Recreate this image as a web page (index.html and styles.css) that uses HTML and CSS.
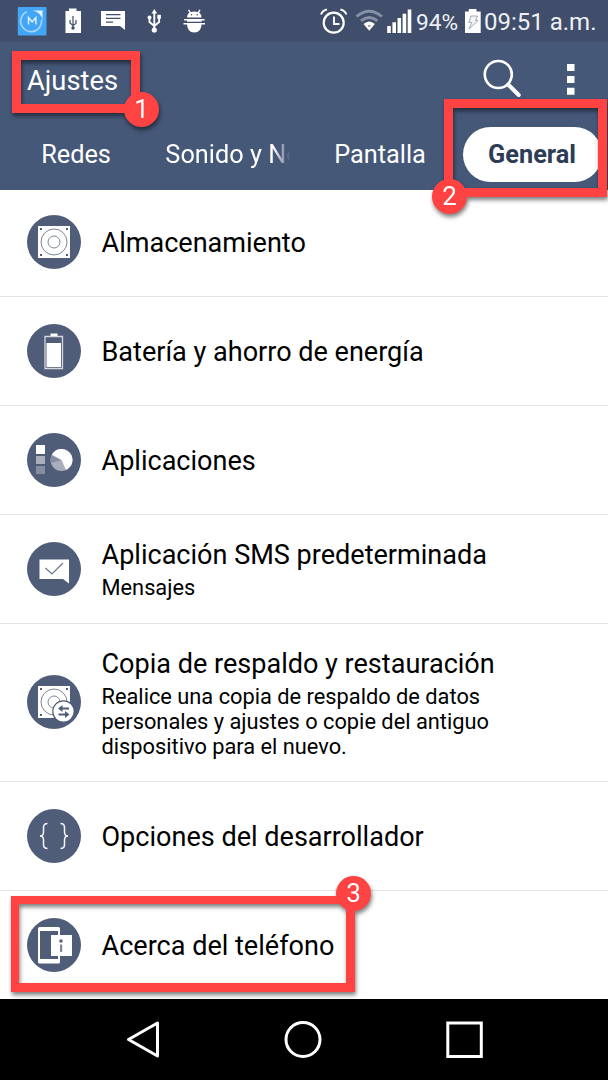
FILE: index.html
```
<!DOCTYPE html>
<html lang="es">

<head>
    <meta charset="utf-8">
    <title>Ajustes</title>
    <link rel="stylesheet" href="styles.css">
</head>

<body>
    <div class="status-bar">
        <svg class="status-icons" width="210" height="42" viewBox="0 0 210 42">
            <rect x="17.800" y="7" width="28.700" height="28.500" rx="1" fill="#42a5f5"/>
            <path d="M27 11.500A10.500 10.500 0 1 0 41.500 19.500" fill="none" stroke="#a9d6fb" stroke-width="1.600"/>
            <path d="M33 10.500h9.500v9.500q-1-7-9.500-9.500z" fill="#e4f3ff"/>
            <path d="M28.500 24.500v-7l3.700 4.500 3.700-4.500v7" fill="none" stroke="#e4f3ff" stroke-width="1.400"/>
            <path d="M65.500 11H69V8.500h7.500V11H81v22H65.500z" fill="#fff"/>
            <path d="M73 16v12M70 20v3l3 2.500 3-2v-3.500" fill="none" stroke="#404e6b" stroke-width="1.200"/>
            <circle cx="73" cy="28" r="1.700" fill="#404e6b"/>
            <path d="M101 11h24v19l-5-4h-19z" fill="#fff"/>
            <path d="M106 14.700h14.500M106 18.300h14.500M106 22.200h7" stroke="#404e6b" stroke-width="1.200"/>
            <path d="M154.300 12v18M149.500 18v4l4.800 4 4.800-4v-4" fill="none" stroke="#fff" stroke-width="1.900"/>
            <path d="M151.500 13.500l2.800-4.500 2.800 4.500z" fill="#fff"/>
            <circle cx="154.300" cy="30" r="2.600" fill="#fff"/>
            <circle cx="149.500" cy="17.500" r="2" fill="#fff"/>
            <rect x="157.300" y="14.800" width="3.600" height="4" fill="#fff"/>
            <path d="M187 17.500q0-6 7.300-6t7.300 6zM187 19h14.600v2.700H187zM187 23.500h14.600q0 9-7.300 9t-7.300-9z" fill="#fff"/>
            <path d="M188.500 9.800l2 3M200 9.800l-2 3M184 19.700h20.500M183.500 23.800h21.500" stroke="#fff" stroke-width="1.400"/>
            <circle cx="191.500" cy="14.800" r=".8" fill="#404e6b"/>
            <circle cx="197.200" cy="14.800" r=".8" fill="#404e6b"/>
        </svg>
        <div class="status-right">
            <svg width="96" height="42" viewBox="318 0 96 42">
                <circle cx="333.700" cy="22.700" r="10" fill="none" stroke="#fff" stroke-width="2.200"/>
                <path d="M334 16.500V24h5.500M321 14.500q1.500-4 6-5M346.400 14.500q-1.500-4-6-5" fill="none" stroke="#fff" stroke-width="1.900"/>
                <path d="M356.500 16.500q12.700-10.500 25.400 0M361 20.800q8.200-6.500 16.400 0" fill="none" stroke="#8791a5" stroke-width="2.800"/>
                <path d="M363.500 24q5.700-5 11.400 0l-5.700 6.800z" fill="#fff"/>
                <path d="M368 26h2.500" stroke="#404e6b"/>
                <path d="M387.200 26h3.600v7h-3.600zM392.400 22.300h3.600V33h-3.600zM397.500 18h3.600v15h-3.600zM402.600 13.700h3.600V33h-3.600zM407.700 9.500h3.600V33h-3.600z" fill="#fff"/>
            </svg>
            <span class="percent">94%</span>
            <svg class="battery" width="18" height="42" viewBox="464 0 18 42">
                <path d="M465 11.500h3.800V9h7.700v2.500h4.200V33H465z" fill="#fff"/>
                <path d="M471 16h6.500l-2 4.500h2.700L469 29l2.800-6.500h-3z" fill="#f5f5f5" stroke="#8f96a6" stroke-width=".8"/>
            </svg>
            <span class="time">09:51 a.m.</span>
        </div>
    </div>

    <div class="header">
        <div class="title-row">
            <div class="title">Ajustes
                <div class="mark mark-1"><span class="badge">1</span></div>
            </div>
            <svg width="108" height="50" viewBox="480 54 108 50">
                <circle cx="498.300" cy="74.500" r="13.500" fill="none" stroke="#fff" stroke-width="2.600"/>
                <path d="M508.200 84.500l10.500 10.500" stroke="#fff" stroke-width="4" stroke-linecap="round"/>
                <path d="M567 64h7.500v7H567zM567 76h7.500v7H567zM567 87.800h7.500v7H567z" fill="#fff"/>
            </svg>
        </div>
        <div class="tabs">
            <div class="tab">Redes</div>
            <div class="tab"><span class="tab-fade">Sonido y No</span></div>
            <div class="tab">Pantalla</div>
            <div class="tab">
                <span class="tab-active">General</span>
                <div class="mark mark-2"><span class="badge">2</span></div>
            </div>
        </div>
    </div>

    <ul class="list">
        <li class="item first">
            <svg class="icon" viewBox="0 0 54 54">
                <circle cx="27" cy="27" r="27" fill="#505d79"/>
                <path d="M11 11h32v32H11z" fill="#fff"/>
                <g fill="none" stroke="#7c869c">
                    <circle cx="27" cy="27" r="13"/>
                    <circle cx="27" cy="27" r="6"/>
                </g>
                <path d="M13 13h2v2h-2zM39 13h2v2h-2zM13 39h2v2h-2zM39 39h2v2h-2z" fill="#505d79"/>
            </svg>
            <div class="name">Almacenamiento</div>
        </li>
        <li class="item">
            <svg class="icon" viewBox="0 0 54 54">
                <circle cx="27" cy="27" r="27" fill="#505d79"/>
                <path d="M18 12.500h17.500v32H18z" fill="none" stroke="#d5d8df" stroke-width="1.300"/>
                <path d="M23.500 9.500h7V12h-7zM19.500 19h14.500v24H19.500z" fill="#fff"/>
            </svg>
            <div class="name">Batería y ahorro de energía</div>
        </li>
        <li class="item">
            <svg class="icon" viewBox="0 0 54 54">
                <circle cx="27" cy="27" r="27" fill="#505d79"/>
                <path d="M9 12h9v9H9z" fill="#fff"/>
                <path d="M9 23h9v8H9z" fill="#a8aebc"/>
                <path d="M9 33h9v8H9z" fill="#858d9f"/>
                <circle cx="34.500" cy="27" r="11" fill="#a8aebc"/>
                <path d="M34.500 27L24.500 22.500A11 11 0 0 0 24 30z" fill="#858d9f"/>
                <path d="M34.500 27L24.900 21.500A11 11 0 1 1 39 37z" fill="#fff"/>
            </svg>
            <div class="name">Aplicaciones</div>
        </li>
        <li class="item">
            <svg class="icon" viewBox="0 0 54 54">
                <circle cx="27" cy="27" r="27" fill="#505d79"/>
                <path d="M12.500 17.500H42v24L36 37H12.500z" fill="#fff"/>
                <path d="M18.500 26l6.500 6 11-11" fill="none" stroke="#69748c" stroke-width="1.200"/>
            </svg>
            <div class="text">
                <div class="name">Aplicación SMS predeterminada</div>
                <div class="desc">Mensajes</div>
            </div>
        </li>
        <li class="item tall">
            <svg class="icon" viewBox="0 0 54 54">
                <circle cx="27" cy="27" r="27" fill="#505d79"/>
                <path d="M11 11h32v32H11z" fill="#fff"/>
                <g fill="none" stroke="#7c869c">
                    <circle cx="27" cy="27" r="13"/>
                    <circle cx="27" cy="27" r="6"/>
                </g>
                <path d="M13 13h2v2h-2zM39 13h2v2h-2zM13 39h2v2h-2z" fill="#505d79"/>
                <circle cx="36.500" cy="36.500" r="10.700" fill="#fff" stroke="#505d79" stroke-width="1.200"/>
                <path d="M31 33.500l4.500-3.500v2.500H42v2h-6.500V37zM42.500 39.500L38 36v2.500h-6.500v2H38V43z" fill="#505d79"/>
            </svg>
            <div class="text">
                <div class="name">Copia de respaldo y restauración</div>
                <div class="desc">Realice una copia de respaldo de datos<br>personales y ajustes o copie del antiguo<br>dispositivo para el nuevo.</div>
            </div>
        </li>
        <li class="item">
            <svg class="icon" viewBox="0 0 54 54">
                <circle cx="27" cy="27" r="27" fill="#505d79"/>
                <path d="M20.500 14.500q-4 0-4 4v4.500q0 4-3.500 4 3.500 0 3.500 4v4.500q0 4 4 4M33.500 14.500q4 0 4 4v4.500q0 4 3.500 4-3.500 0-3.500 4v4.500q0 4-4 4" fill="none" stroke="#f4f5f7" stroke-width="1.500"/>
            </svg>
            <div class="name">Opciones del desarrollador</div>
        </li>
        <li class="item last">
            <svg class="icon" viewBox="0 0 54 54">
                <circle cx="27" cy="27" r="27" fill="#505d79"/>
                <path d="M12.500 9h19q1.500 0 1.500 1.500V18h-2v-5H13v28h18v-4h2v7q0 1.500-1.500 1.500h-19Q11 45.500 11 44V10.500Q11 9 12.500 9z" fill="#fff"/>
                <path d="M24 17h21v21H24z" fill="#fff"/>
                <path d="M32.500 21.500h3v3h-3z" fill="#505d79"/>
                <path d="M33 26.500h2.200V34H33z" fill="#7c869c"/>
            </svg>
            <div class="name">Acerca del teléfono</div>
            <div class="mark mark-3"><span class="badge">3</span></div>
        </li>
    </ul>

    <div class="nav-bar">
        <svg width="608" height="81" viewBox="0 999 608 81" fill="none" stroke="#fff" stroke-width="3">
            <path d="M157.500 1023v33L128.500 1039.500z" stroke-linejoin="round"/>
            <circle cx="303" cy="1039.500" r="17"/>
            <rect x="447.800" y="1023" width="33.500" height="33.500"/>
        </svg>
    </div>
</body>

</html>
```
FILE: styles.css
```
body {
    font-family: Roboto, "Liberation Sans", sans-serif;
    margin: 0;
    padding: 0;
    width: 608px;
    height: 1080px;
    overflow: hidden;
    background-color: #fff;
    color: #000;
}

svg {
    display: block;
    flex: none;
}

.status-bar {
    display: flex;
    justify-content: space-between;
    height: 42px;
    background-color: #404e6b;
    color: #eef0f3;
    font-size: 24px;
    line-height: 45px;
}

.status-right {
    display: flex;
    padding-right: 11px;
    white-space: nowrap;
}

.percent {
    width: 44px;
    margin-left: 2px;
    margin-right: 4px;
    font-size: 22.7px;
}

.time {
    width: 112px;
    margin-left: 2px;
    margin-right: 1px;
}

.header {
    height: 148px;
    background-color: #455878;
    color: #fff;
}

.title-row {
    display: flex;
    justify-content: space-between;
    height: 78px;
    padding: 0 20px 0 27px;
}

.title-row svg {
    margin-top: 12px;
}

.title {
    position: relative;
    font-size: 27.3px;
    line-height: 79px;
}

.tabs {
    display: grid;
    grid-template-columns: repeat(4, 1fr);
    height: 68px;
    font-size: 25.3px;
}

.tab {
    position: relative;
    display: flex;
    align-items: center;
    justify-content: center;
}

.tab-fade {
    -webkit-mask-image: linear-gradient(to right, #000 80%, transparent 92%);
    mask-image: linear-gradient(to right, #000 80%, transparent 92%);
    white-space: nowrap;
    margin-left: 10px;
}

.tab-active {
    width: 139px;
    height: 55px;
    border-radius: 28px;
    background-color: #fff;
    color: #2c3c56;
    font-weight: bold;
    line-height: 55px;
    text-align: center;
}

.list {
    list-style: none;
    margin: 0;
    padding: 0;
}

.item {
    position: relative;
    display: flex;
    align-items: center;
    box-sizing: border-box;
    height: 109px;
    padding-left: 27px;
    border-bottom: 1px solid #e4e4e4;
}

.first {
    height: 107px;
    padding-bottom: 2px;
}

.tall {
    height: 158px;
}

.last {
    height: 108px;
    border-bottom: none;
}

.icon {
    width: 54px;
    height: 54px;
    margin-right: 20.5px;
}

.tall .icon {
    margin-bottom: 1px;
}

.name {
    font-size: 27.05px;
    line-height: 34px;
    padding-top: 2px;
    white-space: nowrap;
}

.text .name {
    padding-top: 0;
}

.tall .name {
    padding-top: 1px;
}

.desc {
    padding-top: 3px;
    font-size: 21.8px;
    line-height: 25.3px;
    white-space: nowrap;
}

/* numbered callouts */
.mark {
    position: absolute;
    box-sizing: border-box;
    border: 9px solid #ff4242;
    filter: drop-shadow(1px 3px 2px rgba(0, 0, 0, 0.5));
}

.mark-1 {
    left: -15px;
    top: 9px;
    width: 128px;
    height: 62px;
}

.mark-2 {
    left: -12px;
    top: -21px;
    width: 163px;
    height: 98px;
}

.mark-3 {
    left: 11px;
    top: 5px;
    width: 344px;
    height: 96px;
    border-width: 8px 9px 9px 8px;
}

.badge {
    position: absolute;
    width: 35px;
    height: 35px;
    border-radius: 50%;
    background-color: #ff4242;
    color: #fff;
    font-size: 26px;
    line-height: 35px;
    text-align: center;
}

.mark-1 .badge {
    left: 103px;
    top: 32px;
}

.mark-2 .badge {
    left: -21px;
    top: 71px;
}

.mark-3 .badge {
    left: 317px;
    top: -28px;
}

.nav-bar {
    height: 84px;
    background-color: #000;
}
```
